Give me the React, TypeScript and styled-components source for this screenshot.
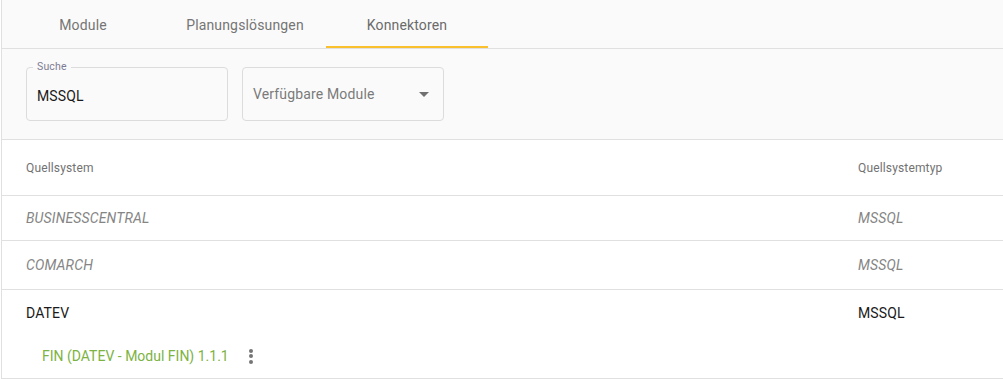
import React from "react";
import styled, { createGlobalStyle } from "styled-components";

const Global = createGlobalStyle`
  html, body { margin: 0; padding: 0; background: #ffffff; }
  body { font-family: Roboto, "Noto Sans", "Liberation Sans", sans-serif; letter-spacing: 0.15px; }
  * { box-sizing: border-box; }
`;

const Page = styled.div`
  margin-left: 1px;
  border-left: 1px solid #e0e0e0;
  height: 379px;
  overflow: hidden;
`;

const TabBar = styled.div`
  display: flex;
  height: 49px;
  background: #fafafa;
  border-bottom: 1px solid #e0e0e0;
`;

const Tab = styled.div<{ $active?: boolean }>`
  width: 162px;
  height: 48px;
  display: flex;
  align-items: center;
  justify-content: center;
  font-size: 14px;
  color: ${(p) => (p.$active ? "#6b6b6b" : "#757575")};
  box-shadow: ${(p) => (p.$active ? "inset 0 -2px 0 #fbc02d" : "none")};
  padding-top: 1px;
`;

const FilterBar = styled.div`
  display: flex;
  gap: 14px;
  padding: 18px 24px;
  height: 91px;
  background: #fafafa;
  border-bottom: 1px solid #e0e0e0;
`;

const Field = styled.div`
  position: relative;
  width: 202px;
  height: 54px;
  border: 1px solid #dcdcdc;
  border-radius: 4px;
  display: flex;
  align-items: center;
  padding: 4px 10px 0 10px;
`;

const FieldLabel = styled.span`
  position: absolute;
  top: -7px;
  left: 6px;
  padding: 0 4px;
  background: #fafafa;
  font-size: 10.5px;
  line-height: 12px;
  color: #7e7c95;
`;

const FieldValue = styled.span`
  font-size: 14px;
  color: #1a1a1a;
`;

const SelectField = styled(Field)`
  justify-content: space-between;
  padding: 0 14px 0 10px;
`;

const Placeholder = styled.span`
  font-size: 14px;
  color: #7a7a7a;
`;

const Arrow = styled.span`
  width: 0;
  height: 0;
  border-left: 5px solid transparent;
  border-right: 5px solid transparent;
  border-top: 5px solid #707070;
`;

const Row = styled.div<{ $h: number; $header?: boolean }>`
  display: grid;
  grid-template-columns: 1fr 145px;
  align-items: center;
  height: ${(p) => p.$h}px;
  padding-left: 24px;
  border-bottom: 1px solid #e0e0e0;
  font-size: ${(p) => (p.$header ? "12px" : "14px")};
  color: ${(p) => (p.$header ? "#727272" : "#1a1a1a")};
`;

const Cell = styled.span<{ $muted?: boolean }>`
  font-style: ${(p) => (p.$muted ? "italic" : "normal")};
  color: ${(p) => (p.$muted ? "#858585" : "inherit")};
`;

const Group = styled.div`
  height: 89px;
  border-bottom: 1px solid #e0e0e0;
  display: flex;
  flex-direction: column;
`;

const GroupHead = styled.div`
  display: grid;
  grid-template-columns: 1fr 145px;
  align-items: center;
  height: 46px;
  padding-left: 24px;
  font-size: 14px;
  color: #1a1a1a;
`;

const SubItem = styled.div`
  display: flex;
  align-items: center;
  gap: 14px;
  height: 42px;
  padding-left: 40px;
  padding-bottom: 2px;
`;

const SubLabel = styled.span`
  font-size: 14px;
  letter-spacing: 0;
  color: #7cb342;
`;

const Kebab = styled.span`
  display: flex;
  flex-direction: column;
  gap: 1.5px;
  padding: 2px 6px;
  span {
    width: 4px;
    height: 4px;
    border-radius: 50%;
    background: #757575;
  }
`;

export default function App() {
  return (
    <>
      <Global />
      <Page>
        <TabBar>
          <Tab>Module</Tab>
          <Tab>Planungslösungen</Tab>
          <Tab $active>Konnektoren</Tab>
        </TabBar>
        <FilterBar>
          <Field>
            <FieldLabel>Suche</FieldLabel>
            <FieldValue>MSSQL</FieldValue>
          </Field>
          <SelectField>
            <Placeholder>Verfügbare Module</Placeholder>
            <Arrow />
          </SelectField>
        </FilterBar>
        <Row $h={56} $header>
          <Cell>Quellsystem</Cell>
          <Cell>Quellsystemtyp</Cell>
        </Row>
        <Row $h={45}>
          <Cell $muted>BUSINESSCENTRAL</Cell>
          <Cell $muted>MSSQL</Cell>
        </Row>
        <Row $h={49}>
          <Cell $muted>COMARCH</Cell>
          <Cell $muted>MSSQL</Cell>
        </Row>
        <Group>
          <GroupHead>
            <Cell>DATEV</Cell>
            <Cell>MSSQL</Cell>
          </GroupHead>
          <SubItem>
            <SubLabel>FIN (DATEV - Modul FIN) 1.1.1</SubLabel>
            <Kebab>
              <span />
              <span />
              <span />
            </Kebab>
          </SubItem>
        </Group>
      </Page>
    </>
  );
}
